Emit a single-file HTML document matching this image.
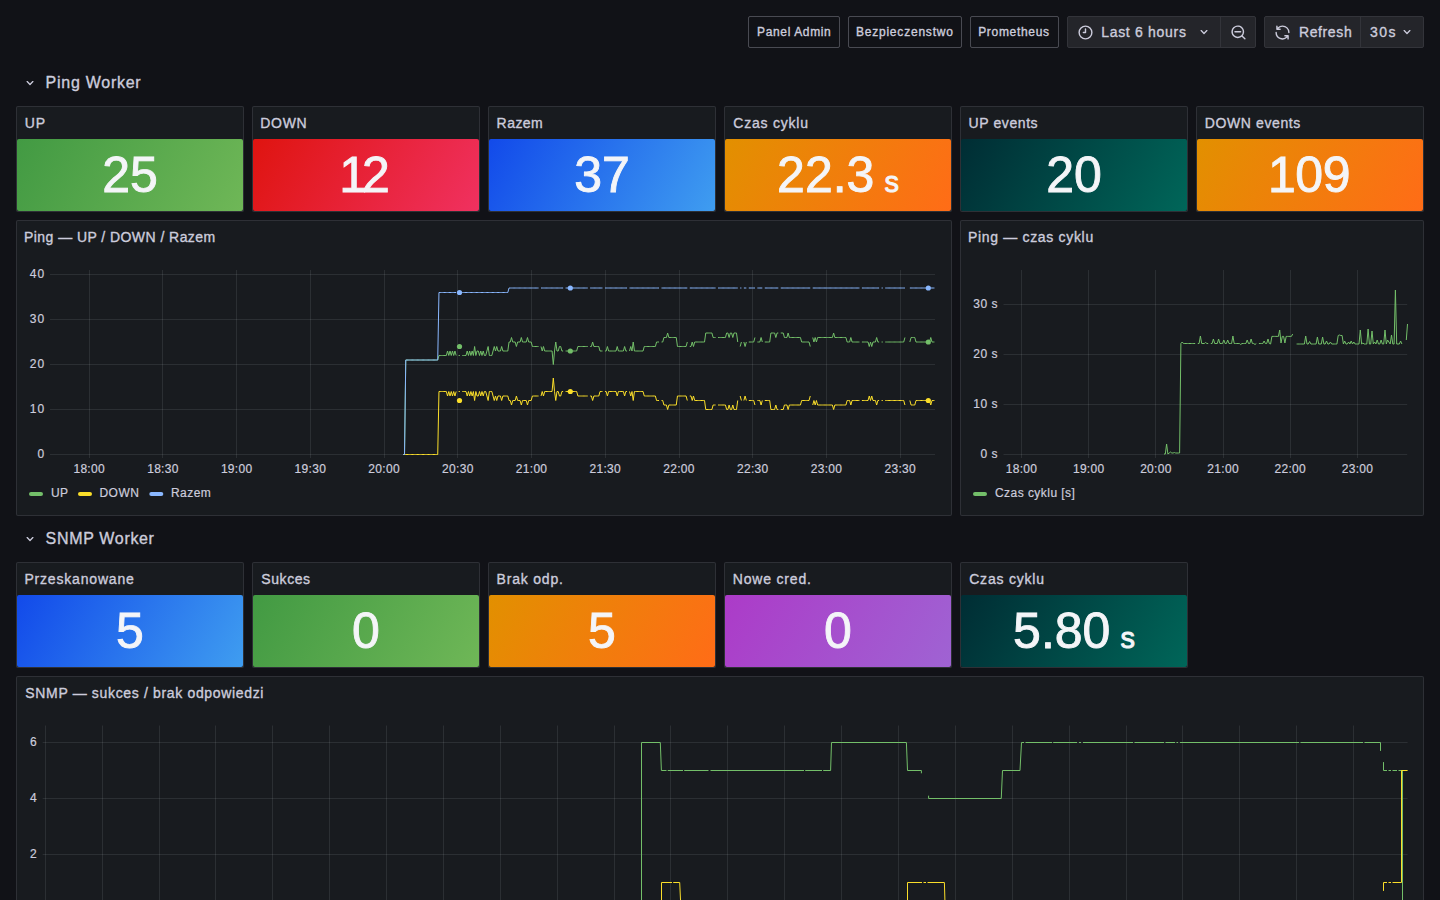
<!DOCTYPE html>
<html><head><meta charset="utf-8"><title>Grafana</title><style>
html,body{margin:0;padding:0;background:#111217;}
body{width:1440px;height:900px;overflow:hidden;position:relative;font-family:"Liberation Sans", sans-serif;color:#ccccdc;}
.lb{position:absolute;top:16px;height:30px;border:1px solid rgba(204,204,220,0.3);border-radius:2px;}
.tg{position:absolute;top:16px;height:30px;background:rgb(36,37,42);border:1px solid rgb(51,52,58);border-radius:2px;}
.sep{position:absolute;top:17px;width:1px;height:30px;background:rgb(51,52,58);}
.panel{position:absolute;background:#181b1f;border:1px solid rgba(204,204,220,0.12);border-radius:2px;}
.sv{position:absolute;width:226px;height:72px;border-radius:2px;display:flex;align-items:center;justify-content:center;color:#f4f5f8;font-size:50px;line-height:72px;-webkit-text-stroke:0.9px #f4f5f8;}
</style></head>
<body>
<div class="lb" style="left:748px;width:90px"></div><div style="position:absolute;left:757.10px;top:24.70px;font-size:12px;line-height:15px;letter-spacing:0.630px;color:#ccccdc;white-space:nowrap;-webkit-text-stroke:0.35px #ccccdc;">Panel Admin</div><div class="lb" style="left:848px;width:112px"></div><div style="position:absolute;left:855.90px;top:24.70px;font-size:12px;line-height:15px;letter-spacing:0.792px;color:#ccccdc;white-space:nowrap;-webkit-text-stroke:0.35px #ccccdc;">Bezpieczenstwo</div><div class="lb" style="left:970px;width:87px"></div><div style="position:absolute;left:978.20px;top:24.70px;font-size:12px;line-height:15px;letter-spacing:0.678px;color:#ccccdc;white-space:nowrap;-webkit-text-stroke:0.35px #ccccdc;">Prometheus</div><div class="tg" style="left:1067px;width:187px"></div><div class="sep" style="left:1220px"></div><svg style="position:absolute;left:1076.5px;top:23.5px" width="17" height="17" viewBox="0 0 24 24"><path fill="#ccccdc" d="M12,2A10,10,0,1,0,22,12,10.01114,10.01114,0,0,0,12,2Zm0,18a8,8,0,1,1,8-8A8.00917,8.00917,0,0,1,12,20ZM12,6a.99974.99974,0,0,0-1,1v4H9a1,1,0,0,0,0,2h3a.99974.99974,0,0,0,1-1V7A.99974.99974,0,0,0,12,6Z"/></svg><div style="position:absolute;left:1101.20px;top:22.90px;font-size:14px;line-height:18px;letter-spacing:0.700px;color:#ccccdc;white-space:nowrap;-webkit-text-stroke:0.35px #ccccdc;">Last 6 hours</div><svg style="position:absolute;left:1196px;top:24px" width="16" height="16" viewBox="0 0 24 24"><path fill="#ccccdc" d="M17,9.17a1,1,0,0,0-1.41,0L12,12.71,8.46,9.17a1,1,0,0,0-1.41,0,1,1,0,0,0,0,1.42l4.24,4.24a1,1,0,0,0,1.42,0L17,10.59A1,1,0,0,0,17,9.17Z"/></svg><svg style="position:absolute;left:1229.5px;top:23.5px" width="17" height="17" viewBox="0 0 24 24"><path fill="#ccccdc" d="M21.71,20.29,18,16.61A9,9,0,1,0,16.61,18l3.68,3.68a1,1,0,0,0,1.42,0A1,1,0,0,0,21.71,20.29ZM11,18a7,7,0,1,1,7-7A7,7,0,0,1,11,18Zm4-8H7a1,1,0,0,0,0,2h8a1,1,0,0,0,0-2Z"/></svg><div class="tg" style="left:1264px;width:158px"></div><div class="sep" style="left:1360px"></div><svg style="position:absolute;left:1273.5px;top:23.5px" width="17" height="17" viewBox="0 0 24 24"><path fill="#ccccdc" d="M19.91,15.51H15.38a1,1,0,0,0,0,2h2.4A8,8,0,0,1,4,12a1,1,0,0,0-2,0,10,10,0,0,0,16.88,7.23V21a1,1,0,0,0,2,0V16.5A1,1,0,0,0,19.91,15.51ZM12,2A10,10,0,0,0,5.12,4.77V3a1,1,0,0,0-2,0V7.5a1,1,0,0,0,1,1h4.5a1,1,0,0,0,0-2H6.22A8,8,0,0,1,20,12a1,1,0,0,0,2,0A10,10,0,0,0,12,2Z"/></svg><div style="position:absolute;left:1298.90px;top:22.90px;font-size:14px;line-height:18px;letter-spacing:0.633px;color:#ccccdc;white-space:nowrap;-webkit-text-stroke:0.35px #ccccdc;">Refresh</div><div style="position:absolute;left:1369.90px;top:22.90px;font-size:14px;line-height:18px;letter-spacing:1.500px;color:#ccccdc;white-space:nowrap;-webkit-text-stroke:0.35px #ccccdc;">30s</div><svg style="position:absolute;left:1399px;top:24px" width="16" height="16" viewBox="0 0 24 24"><path fill="#ccccdc" d="M17,9.17a1,1,0,0,0-1.41,0L12,12.71,8.46,9.17a1,1,0,0,0-1.41,0,1,1,0,0,0,0,1.42l4.24,4.24a1,1,0,0,0,1.42,0L17,10.59A1,1,0,0,0,17,9.17Z"/></svg><svg style="position:absolute;left:22px;top:74.5px" width="16" height="16" viewBox="0 0 24 24"><path fill="#ccccdc" d="M17,9.17a1,1,0,0,0-1.41,0L12,12.71,8.46,9.17a1,1,0,0,0-1.41,0,1,1,0,0,0,0,1.42l4.24,4.24a1,1,0,0,0,1.42,0L17,10.59A1,1,0,0,0,17,9.17Z"/></svg><div style="position:absolute;left:45.60px;top:72.80px;font-size:16px;line-height:20px;letter-spacing:0.730px;color:#ccccdc;white-space:nowrap;-webkit-text-stroke:0.35px #ccccdc;">Ping Worker</div><svg style="position:absolute;left:22px;top:530.5px" width="16" height="16" viewBox="0 0 24 24"><path fill="#ccccdc" d="M17,9.17a1,1,0,0,0-1.41,0L12,12.71,8.46,9.17a1,1,0,0,0-1.41,0,1,1,0,0,0,0,1.42l4.24,4.24a1,1,0,0,0,1.42,0L17,10.59A1,1,0,0,0,17,9.17Z"/></svg><div style="position:absolute;left:45.60px;top:528.90px;font-size:16px;line-height:20px;letter-spacing:0.670px;color:#ccccdc;white-space:nowrap;-webkit-text-stroke:0.35px #ccccdc;">SNMP Worker</div><div class="panel" style="left:16px;top:106px;width:226px;height:104px"></div><div style="position:absolute;left:24.70px;top:114.00px;font-size:14px;line-height:18px;letter-spacing:0.900px;color:#ccccdc;white-space:nowrap;-webkit-text-stroke:0.35px #ccccdc;">UP</div><div class="sv" style="left:17px;top:139px;background:linear-gradient(120deg, rgb(66,154,67), rgb(111,183,87))"><span>25</span></div><div class="panel" style="left:252px;top:106px;width:226px;height:104px"></div><div style="position:absolute;left:260.30px;top:114.00px;font-size:14px;line-height:18px;letter-spacing:0.700px;color:#ccccdc;white-space:nowrap;-webkit-text-stroke:0.35px #ccccdc;">DOWN</div><div class="sv" style="left:253px;top:139px;background:linear-gradient(120deg, rgb(223,20,16), rgb(240,49,96))"><span style="position:relative;left:-1.5px"><span style="margin-right:-5px">1</span>2</span></div><div class="panel" style="left:488px;top:106px;width:226px;height:104px"></div><div style="position:absolute;left:496.60px;top:114.00px;font-size:14px;line-height:18px;letter-spacing:0.450px;color:#ccccdc;white-space:nowrap;-webkit-text-stroke:0.35px #ccccdc;">Razem</div><div class="sv" style="left:489px;top:139px;background:linear-gradient(120deg, rgb(18,74,234), rgb(63,157,240))"><span>37</span></div><div class="panel" style="left:724px;top:106px;width:226px;height:104px"></div><div style="position:absolute;left:733.30px;top:114.00px;font-size:14px;line-height:18px;letter-spacing:0.778px;color:#ccccdc;white-space:nowrap;-webkit-text-stroke:0.35px #ccccdc;">Czas cyklu</div><div class="sv" style="left:725px;top:139px;background:linear-gradient(120deg, rgb(226,144,0), rgb(255,108,23))"><span>22.3</span><span style="font-size:29px;margin-left:10px;position:relative;top:7px">s</span></div><div class="panel" style="left:960px;top:106px;width:226px;height:104px"></div><div style="position:absolute;left:968.60px;top:114.00px;font-size:14px;line-height:18px;letter-spacing:0.587px;color:#ccccdc;white-space:nowrap;-webkit-text-stroke:0.35px #ccccdc;">UP events</div><div class="sv" style="left:961px;top:139px;background:linear-gradient(120deg, rgb(0,45,52), rgb(0,102,89))"><span>20</span></div><div class="panel" style="left:1196px;top:106px;width:226px;height:104px"></div><div style="position:absolute;left:1204.80px;top:114.00px;font-size:14px;line-height:18px;letter-spacing:0.610px;color:#ccccdc;white-space:nowrap;-webkit-text-stroke:0.35px #ccccdc;">DOWN events</div><div class="sv" style="left:1197px;top:139px;background:linear-gradient(120deg, rgb(226,144,0), rgb(255,108,23))"><span style="position:relative;left:-1px;letter-spacing:-0.5px">109</span></div><div class="panel" style="left:16px;top:562px;width:226px;height:104px"></div><div style="position:absolute;left:24.40px;top:570.00px;font-size:14px;line-height:18px;letter-spacing:0.817px;color:#ccccdc;white-space:nowrap;-webkit-text-stroke:0.35px #ccccdc;">Przeskanowane</div><div class="sv" style="left:17px;top:595px;background:linear-gradient(120deg, rgb(18,74,234), rgb(63,157,240))"><span>5</span></div><div class="panel" style="left:252px;top:562px;width:226px;height:104px"></div><div style="position:absolute;left:261.30px;top:570.00px;font-size:14px;line-height:18px;letter-spacing:0.580px;color:#ccccdc;white-space:nowrap;-webkit-text-stroke:0.35px #ccccdc;">Sukces</div><div class="sv" style="left:253px;top:595px;background:linear-gradient(120deg, rgb(66,154,67), rgb(111,183,87))"><span>0</span></div><div class="panel" style="left:488px;top:562px;width:226px;height:104px"></div><div style="position:absolute;left:496.60px;top:570.00px;font-size:14px;line-height:18px;letter-spacing:0.800px;color:#ccccdc;white-space:nowrap;-webkit-text-stroke:0.35px #ccccdc;">Brak odp.</div><div class="sv" style="left:489px;top:595px;background:linear-gradient(120deg, rgb(226,144,0), rgb(255,108,23))"><span>5</span></div><div class="panel" style="left:724px;top:562px;width:226px;height:104px"></div><div style="position:absolute;left:732.80px;top:570.00px;font-size:14px;line-height:18px;letter-spacing:0.811px;color:#ccccdc;white-space:nowrap;-webkit-text-stroke:0.35px #ccccdc;">Nowe cred.</div><div class="sv" style="left:725px;top:595px;background:linear-gradient(120deg, rgb(172,59,200), rgb(159,99,211))"><span>0</span></div><div class="panel" style="left:960px;top:562px;width:226px;height:104px"></div><div style="position:absolute;left:969.20px;top:570.00px;font-size:14px;line-height:18px;letter-spacing:0.789px;color:#ccccdc;white-space:nowrap;-webkit-text-stroke:0.35px #ccccdc;">Czas cyklu</div><div class="sv" style="left:961px;top:595px;background:linear-gradient(120deg, rgb(0,45,52), rgb(0,102,89))"><span>5.80</span><span style="font-size:29px;margin-left:10px;position:relative;top:7px">s</span></div><div class="panel" style="left:16px;top:220px;width:934px;height:294px"></div><div class="panel" style="left:960px;top:220px;width:462px;height:294px"></div><div class="panel" style="left:16px;top:676px;width:1406px;height:400px"></div><div style="position:absolute;left:24.00px;top:228.30px;font-size:14px;line-height:18px;letter-spacing:0.443px;color:#ccccdc;white-space:nowrap;-webkit-text-stroke:0.35px #ccccdc;">Ping — UP / DOWN / Razem</div><div style="position:absolute;left:968.00px;top:228.30px;font-size:14px;line-height:18px;letter-spacing:0.675px;color:#ccccdc;white-space:nowrap;-webkit-text-stroke:0.35px #ccccdc;">Ping — czas cyklu</div><div style="position:absolute;left:25.30px;top:684.30px;font-size:14px;line-height:18px;letter-spacing:0.657px;color:#ccccdc;white-space:nowrap;-webkit-text-stroke:0.35px #ccccdc;">SNMP — sukces / brak odpowiedzi</div><svg style="position:absolute;left:0;top:0" width="1440" height="900" viewBox="0 0 1440 900" font-family="Liberation Sans, sans-serif"><line x1="50" y1="454.5" x2="935" y2="454.5" stroke="rgba(240,250,255,0.09)" stroke-width="1"/><text x="45" y="457.9" text-anchor="end" font-size="12" fill="#ccccdc" stroke="#ccccdc" stroke-width="0.2" letter-spacing="0.9">0</text><line x1="50" y1="409.5" x2="935" y2="409.5" stroke="rgba(240,250,255,0.09)" stroke-width="1"/><text x="45" y="412.9" text-anchor="end" font-size="12" fill="#ccccdc" stroke="#ccccdc" stroke-width="0.2" letter-spacing="0.9">10</text><line x1="50" y1="364.5" x2="935" y2="364.5" stroke="rgba(240,250,255,0.09)" stroke-width="1"/><text x="45" y="367.9" text-anchor="end" font-size="12" fill="#ccccdc" stroke="#ccccdc" stroke-width="0.2" letter-spacing="0.9">20</text><line x1="50" y1="319.5" x2="935" y2="319.5" stroke="rgba(240,250,255,0.09)" stroke-width="1"/><text x="45" y="322.9" text-anchor="end" font-size="12" fill="#ccccdc" stroke="#ccccdc" stroke-width="0.2" letter-spacing="0.9">30</text><line x1="50" y1="274.5" x2="935" y2="274.5" stroke="rgba(240,250,255,0.09)" stroke-width="1"/><text x="45" y="277.9" text-anchor="end" font-size="12" fill="#ccccdc" stroke="#ccccdc" stroke-width="0.2" letter-spacing="0.9">40</text><line x1="89.5" y1="270" x2="89.5" y2="458" stroke="rgba(240,250,255,0.09)" stroke-width="1"/><text x="89.2" y="473" text-anchor="middle" font-size="12" fill="#ccccdc" stroke="#ccccdc" stroke-width="0.2" letter-spacing="0.3">18:00</text><line x1="162.5" y1="270" x2="162.5" y2="458" stroke="rgba(240,250,255,0.09)" stroke-width="1"/><text x="162.93" y="473" text-anchor="middle" font-size="12" fill="#ccccdc" stroke="#ccccdc" stroke-width="0.2" letter-spacing="0.3">18:30</text><line x1="236.5" y1="270" x2="236.5" y2="458" stroke="rgba(240,250,255,0.09)" stroke-width="1"/><text x="236.66000000000003" y="473" text-anchor="middle" font-size="12" fill="#ccccdc" stroke="#ccccdc" stroke-width="0.2" letter-spacing="0.3">19:00</text><line x1="310.5" y1="270" x2="310.5" y2="458" stroke="rgba(240,250,255,0.09)" stroke-width="1"/><text x="310.39" y="473" text-anchor="middle" font-size="12" fill="#ccccdc" stroke="#ccccdc" stroke-width="0.2" letter-spacing="0.3">19:30</text><line x1="384.5" y1="270" x2="384.5" y2="458" stroke="rgba(240,250,255,0.09)" stroke-width="1"/><text x="384.12" y="473" text-anchor="middle" font-size="12" fill="#ccccdc" stroke="#ccccdc" stroke-width="0.2" letter-spacing="0.3">20:00</text><line x1="457.5" y1="270" x2="457.5" y2="458" stroke="rgba(240,250,255,0.09)" stroke-width="1"/><text x="457.85" y="473" text-anchor="middle" font-size="12" fill="#ccccdc" stroke="#ccccdc" stroke-width="0.2" letter-spacing="0.3">20:30</text><line x1="531.5" y1="270" x2="531.5" y2="458" stroke="rgba(240,250,255,0.09)" stroke-width="1"/><text x="531.58" y="473" text-anchor="middle" font-size="12" fill="#ccccdc" stroke="#ccccdc" stroke-width="0.2" letter-spacing="0.3">21:00</text><line x1="605.5" y1="270" x2="605.5" y2="458" stroke="rgba(240,250,255,0.09)" stroke-width="1"/><text x="605.3100000000001" y="473" text-anchor="middle" font-size="12" fill="#ccccdc" stroke="#ccccdc" stroke-width="0.2" letter-spacing="0.3">21:30</text><line x1="679.5" y1="270" x2="679.5" y2="458" stroke="rgba(240,250,255,0.09)" stroke-width="1"/><text x="679.0400000000001" y="473" text-anchor="middle" font-size="12" fill="#ccccdc" stroke="#ccccdc" stroke-width="0.2" letter-spacing="0.3">22:00</text><line x1="752.5" y1="270" x2="752.5" y2="458" stroke="rgba(240,250,255,0.09)" stroke-width="1"/><text x="752.7700000000001" y="473" text-anchor="middle" font-size="12" fill="#ccccdc" stroke="#ccccdc" stroke-width="0.2" letter-spacing="0.3">22:30</text><line x1="826.5" y1="270" x2="826.5" y2="458" stroke="rgba(240,250,255,0.09)" stroke-width="1"/><text x="826.5000000000001" y="473" text-anchor="middle" font-size="12" fill="#ccccdc" stroke="#ccccdc" stroke-width="0.2" letter-spacing="0.3">23:00</text><line x1="900.5" y1="270" x2="900.5" y2="458" stroke="rgba(240,250,255,0.09)" stroke-width="1"/><text x="900.2300000000001" y="473" text-anchor="middle" font-size="12" fill="#ccccdc" stroke="#ccccdc" stroke-width="0.2" letter-spacing="0.3">23:30</text><path d="M403.30,454.50L404.53,454.50L405.76,360.00L406.99,360.00L408.22,360.00L409.45,360.00L410.68,360.00L411.91,360.00L413.14,360.00L414.37,360.00L415.60,360.00L416.82,360.00L418.05,360.00L419.28,360.00L420.51,360.00L421.74,360.00L422.97,360.00L424.20,360.00L425.43,360.00L426.66,360.00L427.89,360.00L429.12,360.00L430.35,360.00L431.58,360.00L432.81,360.00L434.04,360.00L435.27,360.00L436.50,360.00L437.73,360.00L438.96,355.50L440.19,355.50L441.41,355.50L442.64,355.50L443.87,355.50L445.10,355.50L446.33,355.50L447.56,351.00L448.79,355.50L450.02,351.00L451.25,355.50L452.48,351.00L453.71,355.50L454.94,351.00L456.17,355.50M458.63,355.50L459.86,355.50M462.32,355.50L463.55,355.50L464.78,355.50L466.00,355.50L467.23,351.00L468.46,355.50L469.69,351.00L470.92,355.50L472.15,351.00L473.38,355.50L474.61,346.50L475.84,355.50L477.07,351.00L478.30,351.00L479.53,355.50L480.76,351.00L481.99,355.50L483.22,351.00L484.45,355.50L485.68,355.50L486.91,351.00L488.14,346.50L489.37,355.50L490.59,355.50L491.82,355.50L493.05,351.00L494.28,346.50L495.51,351.00L496.74,346.50L497.97,351.00L499.20,351.00L500.43,351.00L501.66,346.50L502.89,351.00L504.12,351.00L505.35,351.00L506.58,351.00L507.81,351.00L509.04,342.00L510.27,342.00L511.50,337.50L512.73,342.00L513.96,342.00L515.18,342.00L516.41,346.50L517.64,342.00L518.87,342.00L520.10,342.00L521.33,337.50L522.56,342.00L523.79,342.00L525.02,342.00L526.25,342.00L527.48,337.50L528.71,342.00L529.94,342.00L531.17,342.00L532.40,346.50L533.63,346.50L534.86,346.50L536.09,346.50L537.32,346.50L538.55,346.50M541.00,346.50L542.23,351.00L543.46,346.50L544.69,351.00L545.92,351.00L547.15,351.00L548.38,351.00L549.61,351.00L550.84,351.00L552.07,351.00L553.30,364.50L554.53,351.00L555.76,342.00L556.99,351.00L558.22,351.00L559.45,346.50L560.68,346.50L561.91,351.00L563.13,351.00M565.59,351.00L566.82,351.00L568.05,351.00L569.28,351.00L570.51,351.00L571.74,351.00L572.97,351.00L574.20,351.00L575.43,351.00L576.66,351.00L577.89,346.50L579.12,346.50L580.35,346.50L581.58,346.50L582.81,346.50L584.04,346.50L585.27,346.50L586.50,346.50L587.73,346.50M590.18,346.50L591.41,346.50L592.64,342.00L593.87,346.50L595.10,346.50L596.33,346.50L597.56,346.50L598.79,346.50L600.02,351.00L601.25,351.00L602.48,351.00M604.94,351.00L606.17,351.00L607.40,346.50L608.63,351.00L609.86,351.00L611.09,351.00L612.32,351.00L613.54,351.00L614.77,351.00L616.00,351.00L617.23,346.50L618.46,351.00L619.69,351.00L620.92,351.00L622.15,351.00L623.38,351.00L624.61,346.50L625.84,351.00L627.07,351.00M629.53,351.00L630.76,346.50L631.99,351.00L633.22,342.00L634.45,351.00L635.68,351.00L636.90,351.00L638.13,351.00L639.36,351.00L640.59,351.00L641.82,351.00L643.05,351.00L644.28,346.50L645.51,346.50L646.74,346.50L647.97,346.50L649.20,346.50L650.43,346.50L651.66,346.50L652.89,346.50L654.12,346.50L655.35,346.50L656.58,342.00L657.81,342.00L659.04,342.00M661.50,342.00L662.72,342.00L663.95,337.50L665.18,337.50L666.41,337.50L667.64,333.00L668.87,337.50L670.10,337.50L671.33,337.50L672.56,337.50L673.79,337.50L675.02,337.50L676.25,337.50L677.48,346.50L678.71,346.50L679.94,346.50L681.17,346.50L682.40,346.50L683.63,346.50L684.86,346.50L686.09,346.50L687.31,342.00M689.77,346.50L691.00,346.50L692.23,342.00L693.46,346.50L694.69,342.00L695.92,342.00L697.15,342.00L698.38,342.00L699.61,342.00L700.84,342.00L702.07,342.00L703.30,342.00L704.53,342.00L705.76,333.00L706.99,333.00L708.22,333.00L709.45,333.00L710.67,333.00L711.90,333.00L713.13,337.50L714.36,337.50L715.59,337.50M718.05,337.50L719.28,337.50L720.51,337.50L721.74,337.50L722.97,337.50L724.20,337.50L725.43,337.50L726.66,333.00L727.89,333.00L729.12,337.50L730.35,333.00L731.58,333.00L732.81,337.50L734.04,333.00L735.27,333.00L736.49,333.00L737.72,342.00M740.18,346.50L741.41,342.00M743.87,342.00L745.10,346.50L746.33,342.00M748.79,342.00L750.02,342.00L751.25,342.00L752.48,342.00L753.71,342.00L754.94,337.50M757.40,342.00L758.63,342.00L759.86,342.00L761.08,337.50L762.31,342.00M764.77,342.00L766.00,342.00L767.23,342.00L768.46,342.00L769.69,342.00L770.92,333.00L772.15,333.00L773.38,333.00L774.61,333.00L775.84,337.50L777.07,333.00L778.30,333.00M780.76,333.00L781.99,333.00L783.22,333.00L784.45,337.50L785.67,337.50L786.90,337.50L788.13,333.00L789.36,337.50L790.59,337.50L791.82,337.50L793.05,337.50L794.28,337.50L795.51,337.50L796.74,337.50L797.97,337.50L799.20,337.50L800.43,337.50L801.66,342.00L802.89,342.00L804.12,342.00L805.35,342.00L806.58,342.00L807.81,342.00L809.04,342.00L810.26,346.50M812.72,337.50L813.95,342.00L815.18,337.50L816.41,342.00L817.64,337.50L818.87,337.50L820.10,337.50L821.33,337.50L822.56,337.50L823.79,337.50L825.02,337.50L826.25,337.50L827.48,337.50L828.71,337.50L829.94,337.50L831.17,337.50L832.40,337.50L833.62,333.00L834.85,337.50L836.08,337.50L837.31,337.50L838.54,337.50L839.77,337.50L841.00,337.50L842.23,337.50L843.46,337.50L844.69,337.50L845.92,337.50L847.15,342.00L848.38,342.00L849.61,342.00L850.84,337.50L852.07,342.00L853.30,342.00L854.53,342.00L855.76,342.00L856.99,342.00L858.22,342.00L859.44,342.00M861.90,342.00L863.13,342.00L864.36,342.00L865.59,342.00L866.82,342.00L868.05,342.00L869.28,346.50L870.51,342.00L871.74,346.50L872.97,342.00L874.20,342.00L875.43,342.00L876.66,337.50L877.89,342.00L879.12,342.00M881.58,342.00L882.81,342.00M885.26,342.00L886.49,342.00L887.72,342.00L888.95,342.00L890.18,342.00L891.41,342.00L892.64,342.00L893.87,342.00L895.10,342.00L896.33,342.00L897.56,342.00L898.79,342.00L900.02,342.00L901.25,342.00L902.48,342.00L903.71,342.00L904.94,337.50M907.39,342.00M909.85,342.00L911.08,337.50L912.31,337.50L913.54,337.50L914.77,337.50L916.00,342.00L917.23,342.00L918.46,342.00L919.69,342.00L920.92,342.00L922.15,342.00L923.38,342.00L924.61,342.00L925.84,342.00L927.07,342.00L928.30,342.00L929.53,342.00L930.76,337.50L931.99,342.00L933.21,342.00L934.44,342.00" fill="none" stroke="#73BF69" stroke-width="1" stroke-linejoin="round"/><path d="M403.30,454.50L404.53,454.50L405.76,454.50L406.99,454.50L408.22,454.50L409.45,454.50L410.68,454.50L411.91,454.50L413.14,454.50L414.37,454.50L415.60,454.50L416.82,454.50L418.05,454.50L419.28,454.50L420.51,454.50L421.74,454.50L422.97,454.50L424.20,454.50L425.43,454.50L426.66,454.50L427.89,454.50L429.12,454.50L430.35,454.50L431.58,454.50L432.81,454.50L434.04,454.50L435.27,454.50L436.50,454.50L437.73,454.50L438.96,391.50L440.19,391.50L441.41,391.50L442.64,391.50L443.87,391.50L445.10,391.50L446.33,391.50L447.56,396.00L448.79,391.50L450.02,396.00L451.25,391.50L452.48,396.00L453.71,391.50L454.94,396.00L456.17,391.50M458.63,391.50L459.86,391.50M462.32,391.50L463.55,391.50L464.78,391.50L466.00,391.50L467.23,396.00L468.46,391.50L469.69,396.00L470.92,391.50L472.15,396.00L473.38,391.50L474.61,400.50L475.84,391.50L477.07,396.00L478.30,396.00L479.53,391.50L480.76,396.00L481.99,391.50L483.22,396.00L484.45,391.50L485.68,391.50L486.91,396.00L488.14,400.50L489.37,391.50L490.59,391.50L491.82,391.50L493.05,396.00L494.28,400.50L495.51,396.00L496.74,400.50L497.97,396.00L499.20,396.00L500.43,396.00L501.66,400.50L502.89,396.00L504.12,396.00L505.35,396.00L506.58,396.00L507.81,396.00L509.04,400.50L510.27,400.50L511.50,405.00L512.73,400.50L513.96,400.50L515.18,400.50L516.41,396.00L517.64,400.50L518.87,400.50L520.10,400.50L521.33,405.00L522.56,400.50L523.79,400.50L525.02,400.50L526.25,400.50L527.48,405.00L528.71,400.50L529.94,400.50L531.17,400.50L532.40,396.00L533.63,396.00L534.86,396.00L536.09,396.00L537.32,396.00L538.55,396.00M541.00,396.00L542.23,391.50L543.46,396.00L544.69,391.50L545.92,391.50L547.15,391.50L548.38,391.50L549.61,391.50L550.84,391.50L552.07,391.50L553.30,378.00L554.53,391.50L555.76,400.50L556.99,391.50L558.22,391.50L559.45,396.00L560.68,396.00L561.91,391.50L563.13,391.50M565.59,391.50L566.82,391.50L568.05,391.50L569.28,391.50L570.51,391.50L571.74,391.50L572.97,391.50L574.20,391.50L575.43,391.50L576.66,391.50L577.89,396.00L579.12,396.00L580.35,396.00L581.58,396.00L582.81,396.00L584.04,396.00L585.27,396.00L586.50,396.00L587.73,396.00M590.18,396.00L591.41,396.00L592.64,400.50L593.87,396.00L595.10,396.00L596.33,396.00L597.56,396.00L598.79,396.00L600.02,391.50L601.25,391.50L602.48,391.50M604.94,391.50L606.17,391.50L607.40,396.00L608.63,391.50L609.86,391.50L611.09,391.50L612.32,391.50L613.54,391.50L614.77,391.50L616.00,391.50L617.23,396.00L618.46,391.50L619.69,391.50L620.92,391.50L622.15,391.50L623.38,391.50L624.61,396.00L625.84,391.50L627.07,391.50M629.53,391.50L630.76,396.00L631.99,391.50L633.22,400.50L634.45,391.50L635.68,391.50L636.90,391.50L638.13,391.50L639.36,391.50L640.59,391.50L641.82,391.50L643.05,391.50L644.28,396.00L645.51,396.00L646.74,396.00L647.97,396.00L649.20,396.00L650.43,396.00L651.66,396.00L652.89,396.00L654.12,396.00L655.35,396.00L656.58,400.50L657.81,400.50L659.04,400.50M661.50,400.50L662.72,400.50L663.95,405.00L665.18,405.00L666.41,405.00L667.64,409.50L668.87,405.00L670.10,405.00L671.33,405.00L672.56,405.00L673.79,405.00L675.02,405.00L676.25,405.00L677.48,396.00L678.71,396.00L679.94,396.00L681.17,396.00L682.40,396.00L683.63,396.00L684.86,396.00L686.09,396.00L687.31,400.50M689.77,396.00L691.00,396.00L692.23,400.50L693.46,396.00L694.69,400.50L695.92,400.50L697.15,400.50L698.38,400.50L699.61,400.50L700.84,400.50L702.07,400.50L703.30,400.50L704.53,400.50L705.76,409.50L706.99,409.50L708.22,409.50L709.45,409.50L710.67,409.50L711.90,409.50L713.13,405.00L714.36,405.00L715.59,405.00M718.05,405.00L719.28,405.00L720.51,405.00L721.74,405.00L722.97,405.00L724.20,405.00L725.43,405.00L726.66,409.50L727.89,409.50L729.12,405.00L730.35,409.50L731.58,409.50L732.81,405.00L734.04,409.50L735.27,409.50L736.49,409.50L737.72,400.50M740.18,396.00L741.41,400.50M743.87,400.50L745.10,396.00L746.33,400.50M748.79,400.50L750.02,400.50L751.25,400.50L752.48,400.50L753.71,400.50L754.94,405.00M757.40,400.50L758.63,400.50L759.86,400.50L761.08,405.00L762.31,400.50M764.77,400.50L766.00,400.50L767.23,400.50L768.46,400.50L769.69,400.50L770.92,409.50L772.15,409.50L773.38,409.50L774.61,409.50L775.84,405.00L777.07,409.50L778.30,409.50M780.76,409.50L781.99,409.50L783.22,409.50L784.45,405.00L785.67,405.00L786.90,405.00L788.13,409.50L789.36,405.00L790.59,405.00L791.82,405.00L793.05,405.00L794.28,405.00L795.51,405.00L796.74,405.00L797.97,405.00L799.20,405.00L800.43,405.00L801.66,400.50L802.89,400.50L804.12,400.50L805.35,400.50L806.58,400.50L807.81,400.50L809.04,400.50L810.26,396.00M812.72,405.00L813.95,400.50L815.18,405.00L816.41,400.50L817.64,405.00L818.87,405.00L820.10,405.00L821.33,405.00L822.56,405.00L823.79,405.00L825.02,405.00L826.25,405.00L827.48,405.00L828.71,405.00L829.94,405.00L831.17,405.00L832.40,405.00L833.62,409.50L834.85,405.00L836.08,405.00L837.31,405.00L838.54,405.00L839.77,405.00L841.00,405.00L842.23,405.00L843.46,405.00L844.69,405.00L845.92,405.00L847.15,400.50L848.38,400.50L849.61,400.50L850.84,405.00L852.07,400.50L853.30,400.50L854.53,400.50L855.76,400.50L856.99,400.50L858.22,400.50L859.44,400.50M861.90,400.50L863.13,400.50L864.36,400.50L865.59,400.50L866.82,400.50L868.05,400.50L869.28,396.00L870.51,400.50L871.74,396.00L872.97,400.50L874.20,400.50L875.43,400.50L876.66,405.00L877.89,400.50L879.12,400.50M881.58,400.50L882.81,400.50M885.26,400.50L886.49,400.50L887.72,400.50L888.95,400.50L890.18,400.50L891.41,400.50L892.64,400.50L893.87,400.50L895.10,400.50L896.33,400.50L897.56,400.50L898.79,400.50L900.02,400.50L901.25,400.50L902.48,400.50L903.71,400.50L904.94,405.00M907.39,400.50M909.85,400.50L911.08,405.00L912.31,405.00L913.54,405.00L914.77,405.00L916.00,400.50L917.23,400.50L918.46,400.50L919.69,400.50L920.92,400.50L922.15,400.50L923.38,400.50L924.61,400.50L925.84,400.50L927.07,400.50L928.30,400.50L929.53,400.50L930.76,405.00L931.99,400.50L933.21,400.50L934.44,400.50" fill="none" stroke="#FADE2A" stroke-width="1" stroke-linejoin="round"/><path d="M403.30,454.50L404.53,454.50L405.76,360.00L406.99,360.00L408.22,360.00L409.45,360.00L410.68,360.00L411.91,360.00L413.14,360.00L414.37,360.00L415.60,360.00L416.82,360.00L418.05,360.00L419.28,360.00L420.51,360.00L421.74,360.00L422.97,360.00L424.20,360.00L425.43,360.00L426.66,360.00L427.89,360.00L429.12,360.00L430.35,360.00L431.58,360.00L432.81,360.00L434.04,360.00L435.27,360.00L436.50,360.00L437.73,360.00L438.96,292.50L440.19,292.50L441.41,292.50L442.64,292.50L443.87,292.50L445.10,292.50L446.33,292.50L447.56,292.50L448.79,292.50L450.02,292.50L451.25,292.50L452.48,292.50L453.71,292.50L454.94,292.50L456.17,292.50M458.63,292.50L459.86,292.50M462.32,292.50L463.55,292.50L464.78,292.50L466.00,292.50L467.23,292.50L468.46,292.50L469.69,292.50L470.92,292.50L472.15,292.50L473.38,292.50L474.61,292.50L475.84,292.50L477.07,292.50L478.30,292.50L479.53,292.50L480.76,292.50L481.99,292.50L483.22,292.50L484.45,292.50L485.68,292.50L486.91,292.50L488.14,292.50L489.37,292.50L490.59,292.50L491.82,292.50L493.05,292.50L494.28,292.50L495.51,292.50L496.74,292.50L497.97,292.50L499.20,292.50L500.43,292.50L501.66,292.50L502.89,292.50L504.12,292.50L505.35,292.50L506.58,292.50L507.81,292.50L509.04,288.00L510.27,288.00L511.50,288.00L512.73,288.00L513.96,288.00L515.18,288.00L516.41,288.00L517.64,288.00L518.87,288.00L520.10,288.00L521.33,288.00L522.56,288.00L523.79,288.00L525.02,288.00L526.25,288.00L527.48,288.00L528.71,288.00L529.94,288.00L531.17,288.00L532.40,288.00L533.63,288.00L534.86,288.00L536.09,288.00L537.32,288.00L538.55,288.00M541.00,288.00L542.23,288.00L543.46,288.00L544.69,288.00L545.92,288.00L547.15,288.00L548.38,288.00L549.61,288.00L550.84,288.00L552.07,288.00L553.30,288.00L554.53,288.00L555.76,288.00L556.99,288.00L558.22,288.00L559.45,288.00L560.68,288.00L561.91,288.00L563.13,288.00M565.59,288.00L566.82,288.00L568.05,288.00L569.28,288.00L570.51,288.00L571.74,288.00L572.97,288.00L574.20,288.00L575.43,288.00L576.66,288.00L577.89,288.00L579.12,288.00L580.35,288.00L581.58,288.00L582.81,288.00L584.04,288.00L585.27,288.00L586.50,288.00L587.73,288.00M590.18,288.00L591.41,288.00L592.64,288.00L593.87,288.00L595.10,288.00L596.33,288.00L597.56,288.00L598.79,288.00L600.02,288.00L601.25,288.00L602.48,288.00M604.94,288.00L606.17,288.00L607.40,288.00L608.63,288.00L609.86,288.00L611.09,288.00L612.32,288.00L613.54,288.00L614.77,288.00L616.00,288.00L617.23,288.00L618.46,288.00L619.69,288.00L620.92,288.00L622.15,288.00L623.38,288.00L624.61,288.00L625.84,288.00L627.07,288.00M629.53,288.00L630.76,288.00L631.99,288.00L633.22,288.00L634.45,288.00L635.68,288.00L636.90,288.00L638.13,288.00L639.36,288.00L640.59,288.00L641.82,288.00L643.05,288.00L644.28,288.00L645.51,288.00L646.74,288.00L647.97,288.00L649.20,288.00L650.43,288.00L651.66,288.00L652.89,288.00L654.12,288.00L655.35,288.00L656.58,288.00L657.81,288.00L659.04,288.00M661.50,288.00L662.72,288.00L663.95,288.00L665.18,288.00L666.41,288.00L667.64,288.00L668.87,288.00L670.10,288.00L671.33,288.00L672.56,288.00L673.79,288.00L675.02,288.00L676.25,288.00L677.48,288.00L678.71,288.00L679.94,288.00L681.17,288.00L682.40,288.00L683.63,288.00L684.86,288.00L686.09,288.00L687.31,288.00M689.77,288.00L691.00,288.00L692.23,288.00L693.46,288.00L694.69,288.00L695.92,288.00L697.15,288.00L698.38,288.00L699.61,288.00L700.84,288.00L702.07,288.00L703.30,288.00L704.53,288.00L705.76,288.00L706.99,288.00L708.22,288.00L709.45,288.00L710.67,288.00L711.90,288.00L713.13,288.00L714.36,288.00L715.59,288.00M718.05,288.00L719.28,288.00L720.51,288.00L721.74,288.00L722.97,288.00L724.20,288.00L725.43,288.00L726.66,288.00L727.89,288.00L729.12,288.00L730.35,288.00L731.58,288.00L732.81,288.00L734.04,288.00L735.27,288.00L736.49,288.00L737.72,288.00M740.18,288.00L741.41,288.00M743.87,288.00L745.10,288.00L746.33,288.00M748.79,288.00L750.02,288.00L751.25,288.00L752.48,288.00L753.71,288.00L754.94,288.00M757.40,288.00L758.63,288.00L759.86,288.00L761.08,288.00L762.31,288.00M764.77,288.00L766.00,288.00L767.23,288.00L768.46,288.00L769.69,288.00L770.92,288.00L772.15,288.00L773.38,288.00L774.61,288.00L775.84,288.00L777.07,288.00L778.30,288.00M780.76,288.00L781.99,288.00L783.22,288.00L784.45,288.00L785.67,288.00L786.90,288.00L788.13,288.00L789.36,288.00L790.59,288.00L791.82,288.00L793.05,288.00L794.28,288.00L795.51,288.00L796.74,288.00L797.97,288.00L799.20,288.00L800.43,288.00L801.66,288.00L802.89,288.00L804.12,288.00L805.35,288.00L806.58,288.00L807.81,288.00L809.04,288.00L810.26,288.00M812.72,288.00L813.95,288.00L815.18,288.00L816.41,288.00L817.64,288.00L818.87,288.00L820.10,288.00L821.33,288.00L822.56,288.00L823.79,288.00L825.02,288.00L826.25,288.00L827.48,288.00L828.71,288.00L829.94,288.00L831.17,288.00L832.40,288.00L833.62,288.00L834.85,288.00L836.08,288.00L837.31,288.00L838.54,288.00L839.77,288.00L841.00,288.00L842.23,288.00L843.46,288.00L844.69,288.00L845.92,288.00L847.15,288.00L848.38,288.00L849.61,288.00L850.84,288.00L852.07,288.00L853.30,288.00L854.53,288.00L855.76,288.00L856.99,288.00L858.22,288.00L859.44,288.00M861.90,288.00L863.13,288.00L864.36,288.00L865.59,288.00L866.82,288.00L868.05,288.00L869.28,288.00L870.51,288.00L871.74,288.00L872.97,288.00L874.20,288.00L875.43,288.00L876.66,288.00L877.89,288.00L879.12,288.00M881.58,288.00L882.81,288.00M885.26,288.00L886.49,288.00L887.72,288.00L888.95,288.00L890.18,288.00L891.41,288.00L892.64,288.00L893.87,288.00L895.10,288.00L896.33,288.00L897.56,288.00L898.79,288.00L900.02,288.00L901.25,288.00L902.48,288.00L903.71,288.00L904.94,288.00M907.39,288.00M909.85,288.00L911.08,288.00L912.31,288.00L913.54,288.00L914.77,288.00L916.00,288.00L917.23,288.00L918.46,288.00L919.69,288.00L920.92,288.00L922.15,288.00L923.38,288.00L924.61,288.00L925.84,288.00L927.07,288.00L928.30,288.00L929.53,288.00L930.76,288.00L931.99,288.00L933.21,288.00L934.44,288.00" fill="none" stroke="#8AB8FF" stroke-width="1" stroke-linejoin="round"/><circle cx="459.5" cy="346.5" r="2.6" fill="#73BF69"/><circle cx="459.5" cy="400.5" r="2.6" fill="#FADE2A"/><circle cx="459.5" cy="292.5" r="2.6" fill="#8AB8FF"/><circle cx="570.3" cy="351.0" r="2.6" fill="#73BF69"/><circle cx="570.3" cy="391.5" r="2.6" fill="#FADE2A"/><circle cx="570.3" cy="288.0" r="2.6" fill="#8AB8FF"/><circle cx="928.3" cy="342.0" r="2.6" fill="#73BF69"/><circle cx="928.3" cy="400.5" r="2.6" fill="#FADE2A"/><circle cx="928.3" cy="288.0" r="2.6" fill="#8AB8FF"/><rect x="29" y="492" width="14" height="4" rx="2" fill="#73BF69"/><text x="51" y="497.3" text-anchor="start" font-size="12" fill="#ccccdc" stroke="#ccccdc" stroke-width="0.2" letter-spacing="0.45">UP</text><rect x="78" y="492" width="14" height="4" rx="2" fill="#FADE2A"/><text x="99.5" y="497.3" text-anchor="start" font-size="12" fill="#ccccdc" stroke="#ccccdc" stroke-width="0.2" letter-spacing="0.45">DOWN</text><rect x="149.3" y="492" width="14" height="4" rx="2" fill="#8AB8FF"/><text x="171" y="497.3" text-anchor="start" font-size="12" fill="#ccccdc" stroke="#ccccdc" stroke-width="0.2" letter-spacing="0.45">Razem</text><line x1="1003.5" y1="454.5" x2="1407.2" y2="454.5" stroke="rgba(240,250,255,0.09)" stroke-width="1"/><text x="998" y="457.9" text-anchor="end" font-size="12" fill="#ccccdc" stroke="#ccccdc" stroke-width="0.2" letter-spacing="0.5">0 s</text><line x1="1003.5" y1="404.5" x2="1407.2" y2="404.5" stroke="rgba(240,250,255,0.09)" stroke-width="1"/><text x="998" y="407.9" text-anchor="end" font-size="12" fill="#ccccdc" stroke="#ccccdc" stroke-width="0.2" letter-spacing="0.5">10 s</text><line x1="1003.5" y1="354.5" x2="1407.2" y2="354.5" stroke="rgba(240,250,255,0.09)" stroke-width="1"/><text x="998" y="357.9" text-anchor="end" font-size="12" fill="#ccccdc" stroke="#ccccdc" stroke-width="0.2" letter-spacing="0.5">20 s</text><line x1="1003.5" y1="304.5" x2="1407.2" y2="304.5" stroke="rgba(240,250,255,0.09)" stroke-width="1"/><text x="998" y="307.9" text-anchor="end" font-size="12" fill="#ccccdc" stroke="#ccccdc" stroke-width="0.2" letter-spacing="0.5">30 s</text><line x1="1021.5" y1="270" x2="1021.5" y2="458" stroke="rgba(240,250,255,0.09)" stroke-width="1"/><text x="1021.5" y="473" text-anchor="middle" font-size="12" fill="#ccccdc" stroke="#ccccdc" stroke-width="0.2" letter-spacing="0.3">18:00</text><line x1="1088.5" y1="270" x2="1088.5" y2="458" stroke="rgba(240,250,255,0.09)" stroke-width="1"/><text x="1088.7" y="473" text-anchor="middle" font-size="12" fill="#ccccdc" stroke="#ccccdc" stroke-width="0.2" letter-spacing="0.3">19:00</text><line x1="1155.5" y1="270" x2="1155.5" y2="458" stroke="rgba(240,250,255,0.09)" stroke-width="1"/><text x="1155.9" y="473" text-anchor="middle" font-size="12" fill="#ccccdc" stroke="#ccccdc" stroke-width="0.2" letter-spacing="0.3">20:00</text><line x1="1223.5" y1="270" x2="1223.5" y2="458" stroke="rgba(240,250,255,0.09)" stroke-width="1"/><text x="1223.1" y="473" text-anchor="middle" font-size="12" fill="#ccccdc" stroke="#ccccdc" stroke-width="0.2" letter-spacing="0.3">21:00</text><line x1="1290.5" y1="270" x2="1290.5" y2="458" stroke="rgba(240,250,255,0.09)" stroke-width="1"/><text x="1290.3" y="473" text-anchor="middle" font-size="12" fill="#ccccdc" stroke="#ccccdc" stroke-width="0.2" letter-spacing="0.3">22:00</text><line x1="1357.5" y1="270" x2="1357.5" y2="458" stroke="rgba(240,250,255,0.09)" stroke-width="1"/><text x="1357.5" y="473" text-anchor="middle" font-size="12" fill="#ccccdc" stroke="#ccccdc" stroke-width="0.2" letter-spacing="0.3">23:00</text><path d="M1164.00,454.00L1165.30,454.00L1166.60,444.00L1167.90,454.00L1169.20,453.00L1170.50,452.00L1171.80,453.00L1173.10,453.00L1174.40,452.50L1175.70,453.00L1177.00,453.00L1178.30,453.00L1179.60,453.00L1180.90,343.50L1182.20,342.00L1183.50,343.50L1184.80,343.50L1186.10,343.50L1187.40,343.50L1188.70,343.50L1190.00,343.50L1191.30,343.50L1192.60,343.50L1193.90,343.50L1195.20,343.50M1197.80,343.50L1199.10,343.50L1200.40,336.00L1201.70,343.50L1203.00,343.50L1204.30,343.50L1205.60,342.50L1206.90,343.50L1208.20,343.50M1210.80,343.50L1212.10,343.50L1213.40,339.00L1214.70,343.50L1216.00,343.50L1217.30,343.50L1218.60,339.00L1219.90,343.50L1221.20,343.50L1222.50,343.50L1223.80,340.00L1225.10,343.50L1226.40,343.50L1227.70,340.00L1229.00,343.50L1230.30,343.50L1231.60,343.50L1232.90,336.00L1234.20,343.50L1235.50,343.50L1236.80,343.50L1238.10,343.50L1239.40,343.50L1240.70,344.50L1242.00,343.50L1243.30,343.50L1244.60,343.50L1245.90,343.50L1247.20,340.00L1248.50,343.50L1249.80,343.50L1251.10,339.00L1252.40,343.50L1253.70,343.50L1255.00,344.50L1256.30,343.50M1258.90,343.50L1260.20,343.50L1261.50,343.50L1262.80,343.50L1264.10,341.00L1265.40,343.50L1266.70,343.50L1268.00,339.00L1269.30,343.50L1270.60,344.00L1271.90,336.40L1273.20,336.40L1274.50,336.40L1275.80,336.40L1277.10,336.40L1278.40,336.40L1279.70,330.00L1281.00,343.00L1282.30,336.40L1283.60,336.40L1284.90,343.00L1286.20,336.40L1287.50,336.40L1288.80,336.40L1290.10,336.40L1291.40,336.40L1292.70,334.00M1296.60,344.00L1297.90,344.00L1299.20,344.00L1300.50,344.00L1301.80,344.00L1303.10,344.00L1304.40,344.00L1305.70,336.00L1307.00,344.00L1308.30,344.00L1309.60,341.50L1310.90,344.00L1312.20,344.00L1313.50,344.00L1314.80,344.00L1316.10,344.00L1317.40,337.00L1318.70,344.00L1320.00,344.00L1321.30,344.00L1322.60,337.00L1323.90,344.00L1325.20,344.00L1326.50,341.00L1327.80,344.00L1329.10,344.00L1330.40,342.00L1331.70,344.00L1333.00,344.00L1334.30,344.00L1335.60,344.00L1336.90,344.00L1338.20,335.50L1339.50,335.00L1340.80,335.50L1342.10,335.50L1343.40,344.00L1344.70,341.00L1346.00,344.00L1347.30,344.00L1348.60,342.00L1349.90,344.00L1351.20,341.00L1352.50,344.00L1353.80,342.00L1355.10,344.00L1356.40,344.00L1357.70,344.00L1359.00,344.00L1360.30,330.00L1361.60,344.00L1362.90,343.00L1364.20,344.00L1365.50,344.00L1366.80,344.00L1368.10,329.00L1369.40,344.00L1370.70,344.00L1372.00,331.00L1373.30,344.00L1374.60,342.00L1375.90,344.00L1377.20,340.00L1378.50,344.00L1379.80,344.00L1381.10,340.00L1382.40,344.00L1383.70,344.00L1385.00,330.00L1386.30,344.00L1387.60,340.00L1388.90,342.00L1390.20,344.00L1391.50,335.00L1392.80,344.00L1394.10,344.00L1395.40,290.00L1396.70,344.00L1398.00,344.00L1399.30,344.00L1400.60,341.00L1401.90,344.00M1406.3,340L1407.5,324" fill="none" stroke="#73BF69" stroke-width="1" stroke-linejoin="round"/><rect x="973" y="492" width="14" height="4" rx="2" fill="#73BF69"/><text x="995" y="497.3" text-anchor="start" font-size="12" fill="#ccccdc" stroke="#ccccdc" stroke-width="0.2" letter-spacing="0.45">Czas cyklu [s]</text><line x1="42.7" y1="854.5" x2="1407.6" y2="854.5" stroke="rgba(240,250,255,0.09)" stroke-width="1"/><text x="37" y="858.2" text-anchor="end" font-size="12" fill="#ccccdc" stroke="#ccccdc" stroke-width="0.2" letter-spacing="0.3">2</text><line x1="42.7" y1="798.5" x2="1407.6" y2="798.5" stroke="rgba(240,250,255,0.09)" stroke-width="1"/><text x="37" y="802.2" text-anchor="end" font-size="12" fill="#ccccdc" stroke="#ccccdc" stroke-width="0.2" letter-spacing="0.3">4</text><line x1="42.7" y1="742.5" x2="1407.6" y2="742.5" stroke="rgba(240,250,255,0.09)" stroke-width="1"/><text x="37" y="746.2" text-anchor="end" font-size="12" fill="#ccccdc" stroke="#ccccdc" stroke-width="0.2" letter-spacing="0.3">6</text><line x1="45.5" y1="725.5" x2="45.5" y2="900" stroke="rgba(240,250,255,0.09)" stroke-width="1"/><line x1="102.5" y1="725.5" x2="102.5" y2="900" stroke="rgba(240,250,255,0.09)" stroke-width="1"/><line x1="159.5" y1="725.5" x2="159.5" y2="900" stroke="rgba(240,250,255,0.09)" stroke-width="1"/><line x1="215.5" y1="725.5" x2="215.5" y2="900" stroke="rgba(240,250,255,0.09)" stroke-width="1"/><line x1="272.5" y1="725.5" x2="272.5" y2="900" stroke="rgba(240,250,255,0.09)" stroke-width="1"/><line x1="329.5" y1="725.5" x2="329.5" y2="900" stroke="rgba(240,250,255,0.09)" stroke-width="1"/><line x1="386.5" y1="725.5" x2="386.5" y2="900" stroke="rgba(240,250,255,0.09)" stroke-width="1"/><line x1="443.5" y1="725.5" x2="443.5" y2="900" stroke="rgba(240,250,255,0.09)" stroke-width="1"/><line x1="500.5" y1="725.5" x2="500.5" y2="900" stroke="rgba(240,250,255,0.09)" stroke-width="1"/><line x1="557.5" y1="725.5" x2="557.5" y2="900" stroke="rgba(240,250,255,0.09)" stroke-width="1"/><line x1="614.5" y1="725.5" x2="614.5" y2="900" stroke="rgba(240,250,255,0.09)" stroke-width="1"/><line x1="670.5" y1="725.5" x2="670.5" y2="900" stroke="rgba(240,250,255,0.09)" stroke-width="1"/><line x1="727.5" y1="725.5" x2="727.5" y2="900" stroke="rgba(240,250,255,0.09)" stroke-width="1"/><line x1="784.5" y1="725.5" x2="784.5" y2="900" stroke="rgba(240,250,255,0.09)" stroke-width="1"/><line x1="841.5" y1="725.5" x2="841.5" y2="900" stroke="rgba(240,250,255,0.09)" stroke-width="1"/><line x1="898.5" y1="725.5" x2="898.5" y2="900" stroke="rgba(240,250,255,0.09)" stroke-width="1"/><line x1="955.5" y1="725.5" x2="955.5" y2="900" stroke="rgba(240,250,255,0.09)" stroke-width="1"/><line x1="1012.5" y1="725.5" x2="1012.5" y2="900" stroke="rgba(240,250,255,0.09)" stroke-width="1"/><line x1="1069.5" y1="725.5" x2="1069.5" y2="900" stroke="rgba(240,250,255,0.09)" stroke-width="1"/><line x1="1126.5" y1="725.5" x2="1126.5" y2="900" stroke="rgba(240,250,255,0.09)" stroke-width="1"/><line x1="1182.5" y1="725.5" x2="1182.5" y2="900" stroke="rgba(240,250,255,0.09)" stroke-width="1"/><line x1="1239.5" y1="725.5" x2="1239.5" y2="900" stroke="rgba(240,250,255,0.09)" stroke-width="1"/><line x1="1296.5" y1="725.5" x2="1296.5" y2="900" stroke="rgba(240,250,255,0.09)" stroke-width="1"/><line x1="1353.5" y1="725.5" x2="1353.5" y2="900" stroke="rgba(240,250,255,0.09)" stroke-width="1"/><path d="M641.50,910.50L641.50,742.50L660.30,742.50L661.40,770.50L666.50,770.50M667.70,770.50L683.00,770.50M684.20,770.50L708.50,770.50M710.50,770.50L804.00,770.50M805.20,770.50L822.00,770.50M823.20,770.50L830.60,770.50L831.50,742.50L906.40,742.50L907.50,770.50L921.40,770.50L921.40,773.30M928.60,795.70L928.60,798.50L1001.25,798.50L1002.50,770.50L1020.00,770.50L1021.50,742.50L1024.00,742.50M1025.50,742.50L1052.00,742.50M1053.20,742.50L1077.00,742.50M1079.00,742.50L1081.00,742.50M1083.00,742.50L1133.00,742.50M1134.50,742.50L1164.00,742.50M1165.50,742.50L1175.00,742.50M1176.50,742.50L1178.00,742.50M1180.00,742.50L1299.00,742.50M1300.50,742.50L1363.00,742.50M1364.50,742.50L1380.50,742.50L1380.50,750.90M1383.50,762.10L1383.50,770.50L1387.00,770.50M1388.50,770.50L1391.00,770.50M1392.50,770.50L1397.00,770.50M1398.50,770.50L1402.50,770.50L1402.50,910.50" fill="none" stroke="#73BF69" stroke-width="1" stroke-linejoin="round"/><path d="M661.50,910.50L661.50,882.50L672.00,882.50M673.20,882.50L679.70,882.50L681.00,910.50M907.50,910.50L907.50,882.50L922.00,882.50M923.50,882.50L926.00,882.50M927.50,882.50L944.40,882.50L945.20,910.50M1383.50,890.90L1383.50,882.50L1387.00,882.50M1388.50,882.50L1391.00,882.50M1392.50,882.50L1401.50,882.50L1401.50,770.50L1407.60,770.50" fill="none" stroke="#FADE2A" stroke-width="1" stroke-linejoin="round"/></svg>
</body></html>
